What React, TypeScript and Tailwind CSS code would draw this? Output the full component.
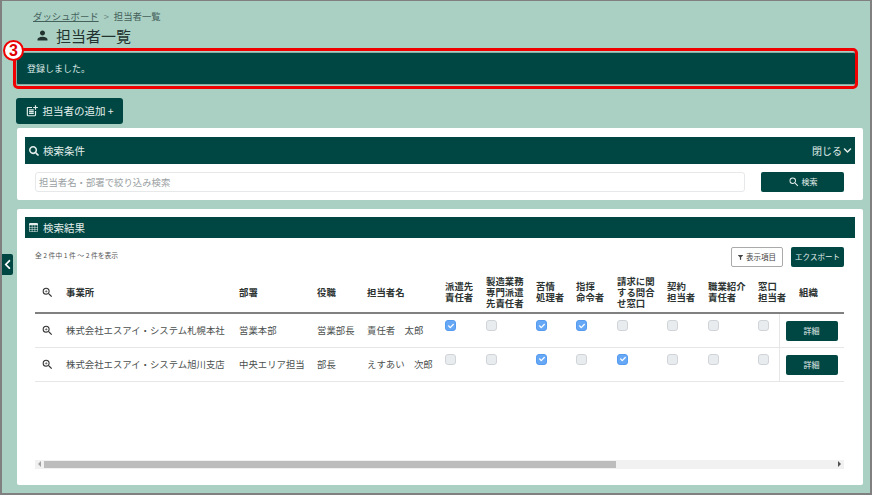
import React from "react";
import { FaChevronDown, FaChevronLeft, FaFilter, FaSearch, FaCheck } from "react-icons/fa";
import { MdPerson, MdOutlinePostAdd, MdSearch, MdOutlineZoomIn } from "react-icons/md";
import { BsTable } from "react-icons/bs";

const headers = [
  { label: "", span: 1 },
  { label: "事業所", span: 1 },
  { label: "部署", span: 1 },
  { label: "役職", span: 1 },
  { label: "担当者名", span: 1 },
  { label: "派遣先\n責任者", span: 1 },
  { label: "製造業務\n専門派遣\n先責任者", span: 1 },
  { label: "苦情\n処理者", span: 1 },
  { label: "指揮\n命令者", span: 1 },
  { label: "請求に関\nする問合\nせ窓口", span: 1 },
  { label: "契約\n担当者", span: 1 },
  { label: "職業紹介\n責任者", span: 1 },
  { label: "窓口\n担当者", span: 2 },
  { label: "組織", span: 1 },
];

const rows = [
  {
    office: "株式会社エスアイ・システム札幌本社",
    dept: "営業本部",
    role: "営業部長",
    name: "責任者　太郎",
    checks: [true, false, true, true, false, false, false, false],
  },
  {
    office: "株式会社エスアイ・システム旭川支店",
    dept: "中央エリア担当",
    role: "部長",
    name: "えすあい　次郎",
    checks: [false, false, true, false, true, false, false, false],
  },
];

function Check({ on }: { on: boolean }) {
  return on ? (
    <div className="w-[11px] h-[11px] rounded-[3px] bg-[#66a8f5] border border-[#559bf0] flex items-center justify-center">
      <FaCheck className="text-white text-[6px]" />
    </div>
  ) : (
    <div className="w-[11px] h-[11px] rounded-[3px] bg-[#e9ecef] border border-[#d0d4d9]" />
  );
}

export default function App() {
  return (
    <div className="w-[872px] h-[495px] overflow-hidden relative bg-[#aad0c4] border-t border-l-[2px] border-r-[2px] border-b-[2px] border-[#808080] font-['Noto_Sans_CJK_JP','Liberation_Sans',sans-serif] text-[#333]">
      {/* breadcrumb + title */}
      <div className="pl-[31px] pt-[8px] flex items-center h-[14px] mt-[4px] text-[9.4px] text-[#44605a]">
        <span className="underline">ダッシュボード</span>
        <span className="mx-[5px] text-[#6b8a82]">&gt;</span>
        <span>担当者一覧</span>
      </div>
      <div className="pl-[33px] mt-[4px] flex items-center h-[24px] text-[#23332f]">
        <MdPerson className="text-[15px]" />
        <span className="ml-[6px] text-[15px] leading-none">担当者一覧</span>
      </div>

      {/* alert */}
      <div className="ml-[14px] mr-[14px] mt-[5px] h-[33px] bg-[#004743] border border-[#8aa9a1] rounded-[2px] flex items-center pl-[10px] text-[9px] text-[#dfeae7]">
        登録しました。
      </div>

      <button className="ml-[14px] mt-[13px] w-[107px] h-[26px] rounded-[3px] bg-[#004743] flex items-center justify-center text-[10.5px] text-[#e4eeeb]">
        <MdOutlinePostAdd className="text-[14px] mr-[3px]" />
        担当者の追加 +
      </button>

      {/* search card */}
      <div className="ml-[14.5px] mr-[7px] mt-[4px] h-[72px] bg-white rounded-[2px] pl-[8.5px] pr-[8px] pt-[9px]">
        <div className="h-[27px] bg-[#004743] flex items-center justify-between pl-[4px] pr-[3px] text-[10px] text-[#e4eeeb]">
          <div className="flex items-center">
            <FaSearch className="text-[10px] mr-[4px]" />
            <span className="text-[10.5px]">検索条件</span>
          </div>
          <div className="flex items-center">
            <span>閉じる</span>
            <FaChevronDown className="text-[9px] ml-[1px]" />
          </div>
        </div>
        <div className="mt-[8px] flex items-center pl-[10px] pr-[11px]">
          <div className="flex-1 h-[20px] border border-[#e6e8ea] rounded-[3px] flex items-center pl-[3px] text-[9.4px] text-[#9a9fa3]">
            担当者名・部署で絞り込み検索
          </div>
          <button className="ml-[16px] w-[83px] h-[20px] rounded-[2px] bg-[#004743] flex items-center justify-center text-[8px] text-[#e4eeeb]">
            <MdSearch className="text-[12px] mr-[2px]" />
            検索
          </button>
        </div>
      </div>

      {/* result card */}
      <div className="ml-[14.5px] mr-[7px] mt-[9px] h-[276px] bg-white rounded-[2px] pl-[8.5px] pr-[8px] pt-[8px]">
        <div className="h-[21px] bg-[#004743] flex items-center pl-[4px] text-[10.5px] text-[#e4eeeb]">
          <BsTable className="text-[9px] mr-[5px]" />
          検索結果
        </div>
        <div className="pl-[10px] pr-[11px]">
          <div className="mt-[9px] h-[20px] flex items-center justify-between">
            <span className="text-[6.8px] text-[#555] mt-[-4px]">全 2 件中 1 件 ～ 2 件を表示</span>
            <div className="flex items-center">
              <button className="w-[52px] h-[20px] border border-[#aaa] rounded-[2px] flex items-center justify-center text-[7.5px] text-[#444]">
                <FaFilter className="text-[5px] mr-[3px]" />
                表示項目
              </button>
              <button className="ml-[8px] w-[53px] h-[20px] rounded-[2px] bg-[#004743] flex items-center justify-center text-[7.5px] text-[#e4eeeb]">
                エクスポート
              </button>
            </div>
          </div>

          <div className="mt-[5px] overflow-hidden">
            <table className="table-fixed w-[809px] border-collapse text-[9.4px]">
              <colgroup>
                <col className="w-[31px]" />
                <col className="w-[173px]" />
                <col className="w-[78px]" />
                <col className="w-[50px]" />
                <col className="w-[78px]" />
                <col className="w-[41px]" />
                <col className="w-[50px]" />
                <col className="w-[40px]" />
                <col className="w-[41px]" />
                <col className="w-[50px]" />
                <col className="w-[41px]" />
                <col className="w-[50px]" />
                <col className="w-[21px]" />
                <col className="w-[20px]" />
                <col className="w-[45px]" />
              </colgroup>
              <thead>
                <tr className="h-[41px] border-b-2 border-[#808080]">
                  {headers.map((h, i) => (
                    <th key={i} colSpan={h.span} className="p-0 text-left font-bold text-[#2c3331] leading-[11px] whitespace-pre-line align-middle">
                      {i === 0 ? (
                        <div className="pl-[6px]">
                          <MdOutlineZoomIn className="text-[13px] text-[#333]" />
                        </div>
                      ) : (
                        h.label
                      )}
                    </th>
                  ))}
                </tr>
              </thead>
              <tbody>
                {rows.map((r) => (
                  <tr key={r.office} className="h-[34px] border-b border-[#e4e6e8] text-[#4a4f4e]">
                    <td className="p-0 align-middle">
                      <div className="pl-[6px] pt-[1px]">
                        <MdOutlineZoomIn className="text-[13px] text-[#333]" />
                      </div>
                    </td>
                    <td className="p-0 whitespace-nowrap">{r.office}</td>
                    <td className="p-0 whitespace-nowrap">{r.dept}</td>
                    <td className="p-0 whitespace-nowrap">{r.role}</td>
                    <td className="p-0 whitespace-nowrap">{r.name}</td>
                    {r.checks.map((c, i) => (
                      <td key={i} className="p-0 align-top pt-[6px]">
                        <Check on={c} />
                      </td>
                    ))}
                    <td colSpan={2} className="p-0 align-top border-l border-[#e4e6e8] pt-[7px] pl-[6px]">
                      <button className="w-[52px] h-[20px] rounded-[2px] bg-[#004743] text-[8px] text-[#e4eeeb]">
                        詳細
                      </button>
                    </td>
                  </tr>
                ))}
              </tbody>
            </table>
          </div>

          {/* scrollbar */}
          <div className="mt-[78px] h-[9px] bg-[#f1f1f1] flex items-center">
            <div className="w-0 h-0 ml-[3px] border-y-[3px] border-y-transparent border-r-[3px] border-r-[#a3a3a3]" />
            <div className="ml-[3px] w-[572px] h-[7px] bg-[#bdbdbd]" />
            <div className="flex-1" />
            <div className="w-0 h-0 mr-[3px] border-y-[3px] border-y-transparent border-l-[3px] border-l-[#505050]" />
          </div>
        </div>
      </div>

      {/* side toggle */}
      <div className="absolute left-0 top-[253px] w-[11px] h-[21px] bg-[#004743] rounded-r-[2px] flex items-center justify-center text-white">
        <FaChevronLeft className="text-[11px]" />
      </div>

      {/* red annotation */}
      <div className="absolute left-[11px] top-[47px] w-[845px] h-[41px] border-[3px] border-[#f00000] rounded-[5px] pointer-events-none" />
      <div className="absolute left-[1px] top-[39px] w-[21px] h-[21px] rounded-full bg-white border-[2.5px] border-[#f00000] flex items-center justify-center text-[#e00000] text-[16px] font-bold font-['Liberation_Sans',sans-serif] leading-none">
        3
      </div>
    </div>
  );
}
